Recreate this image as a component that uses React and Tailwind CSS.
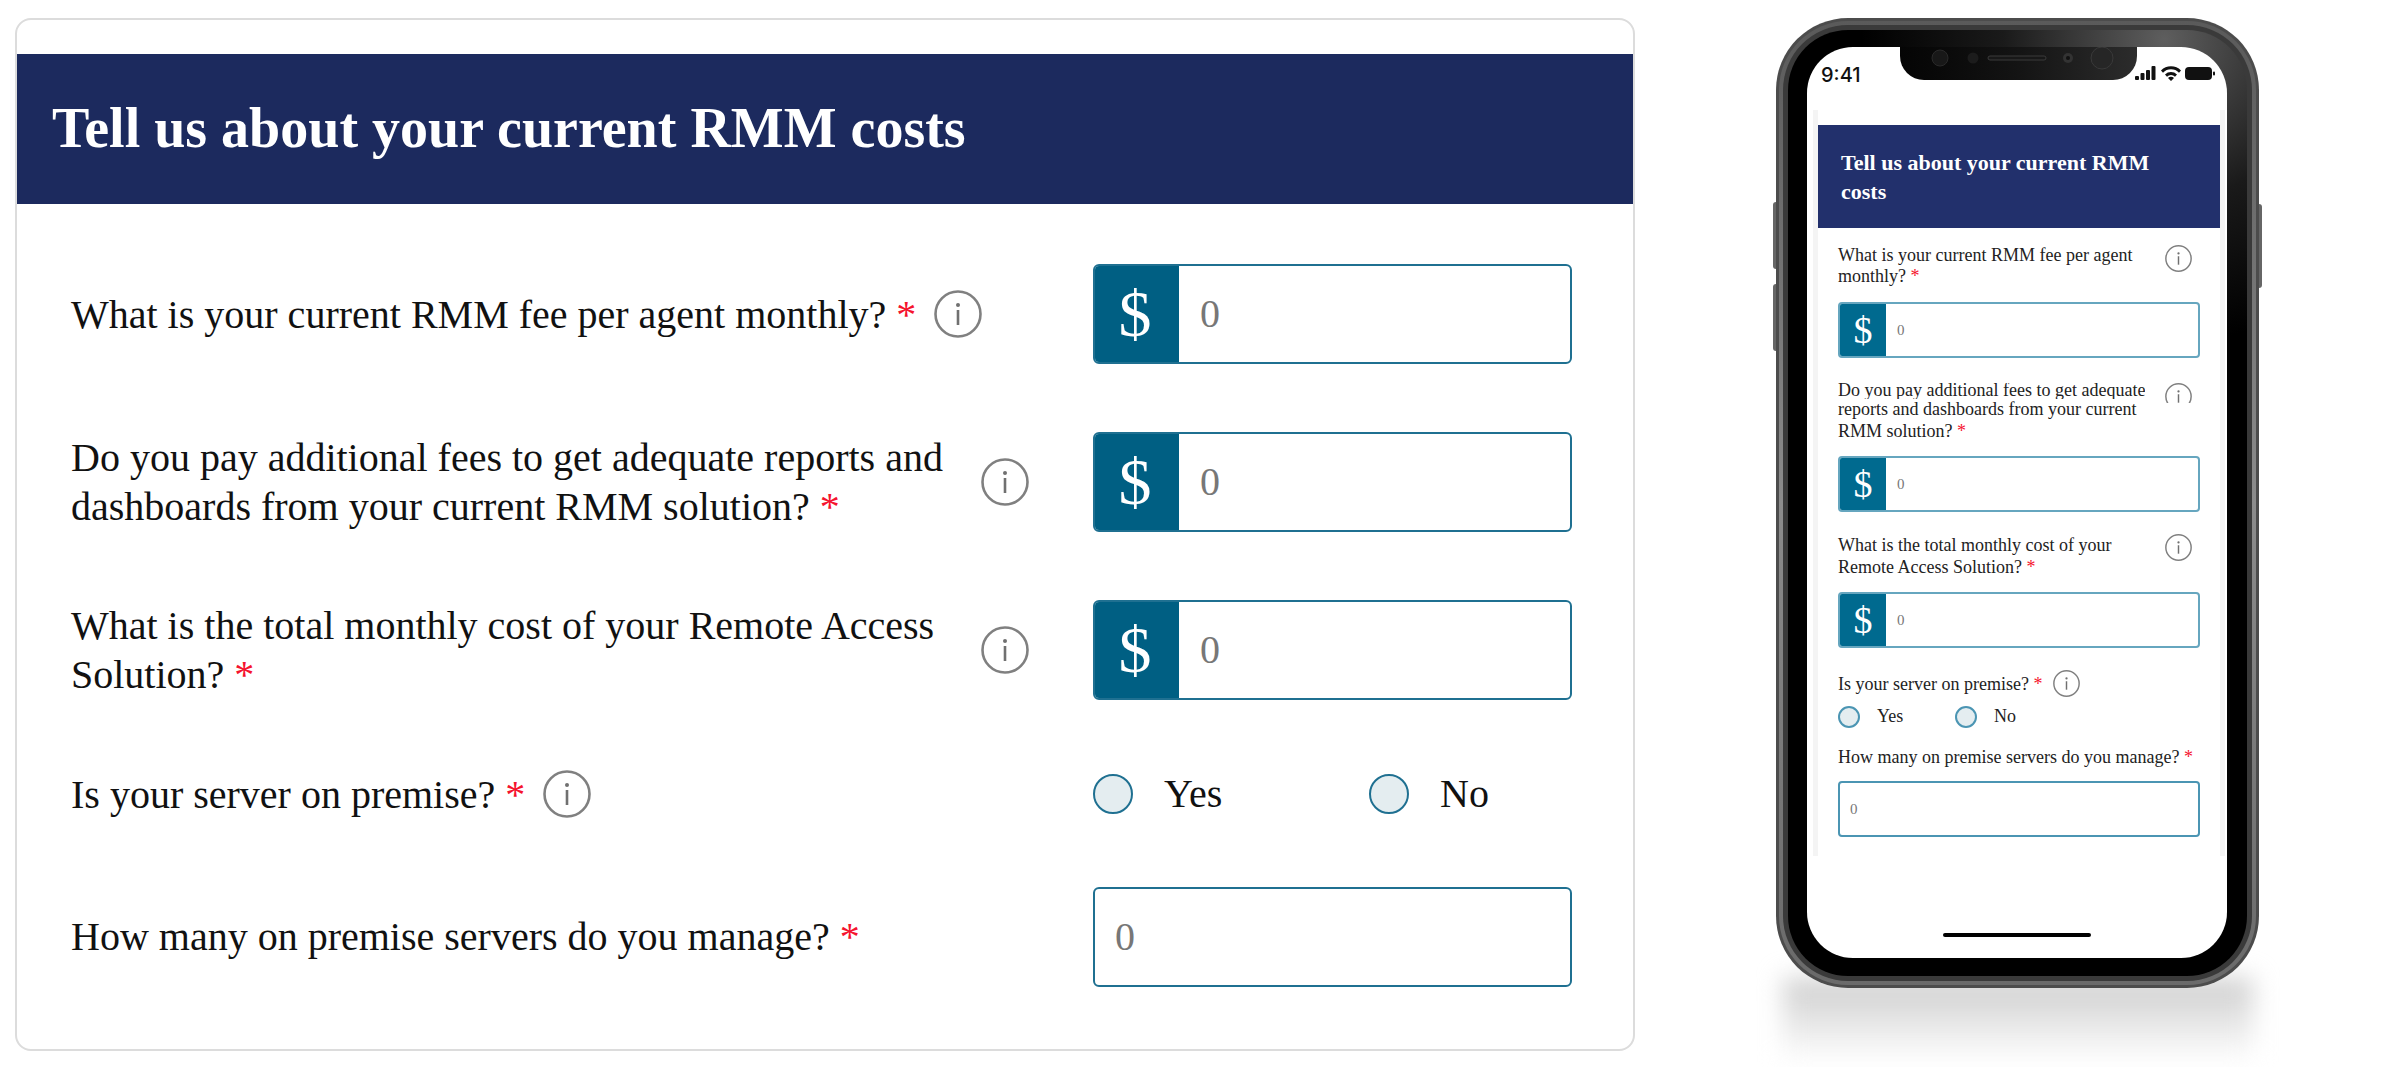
import React from 'react'

const serif = "font-['Liberation_Serif','Times_New_Roman',serif]"

function InfoIcon({ size }) {
  return (
    <svg width={size} height={size} viewBox="0 0 48 48" fill="none" className="shrink-0">
      <circle cx="24" cy="24" r="22.5" stroke="#808080" strokeWidth="2.6" />
      <circle cx="24" cy="15" r="2" fill="#707070" />
      <rect x="22.7" y="20" width="2.6" height="15" fill="#707070" />
    </svg>
  )
}

function Star() {
  return <span className="text-[#f5132e]">*</span>
}

// desktop form rows
function MoneyInput() {
  return (
    <div className="flex w-[479px] h-[100px] rounded-md border-2 border-[#1f7091] overflow-hidden bg-white">
      <div className="w-[84px] bg-[#005f83] text-white text-[66px] flex items-center justify-center leading-none pr-[4px]">$</div>
      <div className="flex-1 pl-[21px] flex items-center text-[40px] text-[#777]">0</div>
    </div>
  )
}

function Row({ h, label, mb, children, wide }) {
  return (
    <div className={`flex items-center ${h} ${mb}`}>
      <div className="w-[1022px] flex items-center justify-between">
        <div className="flex items-center gap-[18px]">
          <div className={`text-[40px] leading-[49px] text-[#111] ${wide ? 'w-[900px]' : ''}`}>{label}</div>
          {!wide && <InfoIcon size={48} />}
        </div>
        {wide && <div className="mr-[64px]"><InfoIcon size={48} /></div>}
      </div>
      {children}
    </div>
  )
}

function Radio({ label, w }) {
  return (
    <div className={`flex items-center gap-[31px] ${w}`}>
      <div className="w-[40px] h-[40px] rounded-full border-2 border-[#1f7091] bg-[#e4edf0]"></div>
      <span className="text-[40px] text-[#111]">{label}</span>
    </div>
  )
}

function DesktopCard() {
  return (
    <div className="w-[1620px] h-[1033px] rounded-[16px] border-2 border-[#dcdcdc] bg-white overflow-hidden pt-[34px] shrink-0">
      <div className="h-[150px] bg-[#1c2a5e] pl-[35px] pb-[3px] flex items-center">
        <h1 className="text-[56px] font-bold text-white leading-none">Tell us about your current RMM costs</h1>
      </div>
      <div className="pl-[54px] pt-[60px]">
        <Row h="h-[100px]" mb="mb-[68px]" label={<>What is your current RMM fee per agent monthly? <Star /></>}>
          <MoneyInput />
        </Row>
        <Row h="h-[100px]" mb="mb-[68px]" wide label={<>Do you pay additional fees to get adequate reports and<br />dashboards from your current RMM solution? <Star /></>}>
          <MoneyInput />
        </Row>
        <Row h="h-[100px]" mb="mb-[58px]" wide label={<>What is the total monthly cost of your Remote Access<br />Solution? <Star /></>}>
          <MoneyInput />
        </Row>
        <Row h="h-[72px]" mb="mb-[57px]" label={<>Is your server on premise? <Star /></>}>
          <Radio label="Yes" w="w-[276px]" />
          <Radio label="No" />
        </Row>
        <div className="flex items-center h-[100px]">
          <div className="w-[1022px] text-[40px] text-[#111]">How many on premise servers do you manage? <Star /></div>
          <div className="w-[479px] h-[100px] rounded-md border-2 border-[#1f7091] flex items-center pl-[20px] text-[40px] text-[#777]">0</div>
        </div>
      </div>
    </div>
  )
}

// phone form
function PhoneMoney({ mb }) {
  return (
    <div className={`flex h-[56px] rounded-[4px] border-2 border-[#66a6bf] overflow-hidden ${mb}`}>
      <div className="w-[46px] bg-[#006a8f] text-white text-[38px] flex items-center justify-center leading-none">$</div>
      <div className="flex-1 pl-[11px] flex items-center text-[15px] text-[#777]">0</div>
    </div>
  )
}

function StatusIcons() {
  return (
    <svg width="80" height="16" viewBox="0 0 80 16" fill="#111" className="mt-[2px]">
      <rect x="0" y="10" width="4" height="4" rx="1" />
      <rect x="5.500" y="7" width="4" height="7" rx="1" />
      <rect x="11" y="4" width="4" height="10" rx="1" />
      <rect x="16.500" y="0" width="4" height="14" rx="1" />
      <path d="M26 4.500a14 14 0 0 1 20 0l-2 2.200a11 11 0 0 0-16 0zM30 8.500a8.500 8.500 0 0 1 12 0l-2 2.200a5.500 5.500 0 0 0-8 0zM36 15l-3-3a4 4 0 0 1 6 0z" />
      <rect x="50" y="1" width="27" height="13" rx="4" />
      <rect x="78" y="5.500" width="2" height="4" rx="1" />
    </svg>
  )
}

function Notch() {
  return (
    <div className="absolute left-[93px] top-0 w-[237px] h-[33px] bg-gradient-to-r from-[#050505] via-[#141414] to-[#2c2c2c] rounded-b-[24px]">
      <svg width="237" height="33" viewBox="0 0 237 33" fill="none">
        <circle cx="40" cy="11" r="8" stroke="#2a2a2a" fill="#181818" />
        <circle cx="73" cy="11" r="5.500" fill="#1c1c1c" />
        <rect x="88" y="9" width="58" height="4" rx="2" stroke="#3a3a3a" fill="#181818" />
        <circle cx="168" cy="11" r="5" fill="#333" />
        <circle cx="168" cy="11" r="2" fill="#111" />
        <circle cx="202" cy="11" r="11" stroke="#3a3a3a" fill="#262626" />
      </svg>
    </div>
  )
}

function Phone() {
  return (
    <div className="w-[483px] h-[970px] rounded-[72px] bg-[#4c4c4c] p-[3px] relative z-10 shrink-0">
      {/* side buttons */}
      <div className="absolute left-[-3px] top-[184px] w-[3px] h-[67px] bg-[#666] rounded-l-sm"></div>
      <div className="absolute left-[-3px] top-[266px] w-[3px] h-[67px] bg-[#666] rounded-l-sm"></div>
      <div className="absolute right-[-3px] top-[186px] w-[3px] h-[84px] bg-[#666] rounded-r-sm"></div>
      <div className="w-full h-full rounded-[69px] bg-gradient-to-b from-[#5a5a5a] via-[#8c8c8c] to-[#6a6a6a] p-[4px]">
        <div className="w-full h-full rounded-[65px] bg-[#3a3a3a] p-[5px]">
          <div className="w-full h-full rounded-[60px] bg-[radial-gradient(circle_at_82%_1%,#5e5e5e,#1a1a1a_16%,#000_30%)] pl-[19px] pr-[20px] pt-[17px]">
            <div className="relative w-full h-[911px] rounded-[46px] bg-white overflow-hidden">
              <Notch />
              <div className="flex items-start justify-between h-[63px] pl-[14px] pr-[12px] pt-[17px] text-[20px] leading-[22px] font-medium font-['Inter',sans-serif] text-[#111]">
                <span>9:41</span>
                <StatusIcons />
              </div>
              <div className="mx-[6px] w-[412px] h-[746px] border-x-[5px] border-[#f4f4f4] pt-[15px]">
                <div className="h-[103px] bg-[#22306c] text-white font-bold text-[22px] leading-[29px] pl-[23px] pt-[23px]">
                  Tell us about your current RMM<br />costs
                </div>
                <div className="px-[20px] pt-[17px] text-[18px] text-[#222]">
                  <div className="flex justify-between leading-[21px] mb-[15px]">
                    <div>What is your current RMM fee per agent<br />monthly? <Star /></div>
                    <div className="mr-[8px]"><InfoIcon size={27} /></div>
                  </div>
                  <PhoneMoney mb="mb-[25px]" />
                  <div className="flex justify-between mb-[13px]">
                    <div>
                      <div className="leading-[15px] h-[16px] overflow-hidden">Do you pay additional fees to get adequate</div>
                      <div className="leading-[20px]">reports and dashboards from your current</div>
                      <div className="leading-[24px]">RMM solution? <Star /></div>
                    </div>
                    <div className="mr-[8px] h-[20px] overflow-hidden"><InfoIcon size={27} /></div>
                  </div>
                  <PhoneMoney mb="mb-[22px]" />
                  <div className="flex justify-between leading-[22px] mb-[14px]">
                    <div>What is the total monthly cost of your<br />Remote Access Solution? <Star /></div>
                    <div className="mr-[8px]"><InfoIcon size={27} /></div>
                  </div>
                  <PhoneMoney mb="mb-[22px]" />
                  <div className="flex items-center gap-[11px] h-[27px] mb-[9px] leading-[22px]">
                    <div>Is your server on premise? <Star /></div>
                    <InfoIcon size={27} />
                  </div>
                  <div className="flex items-center h-[21px] mb-[20px] leading-[21px]">
                    <div className="w-[117px] flex items-center gap-[17px]">
                      <div className="w-[22px] h-[22px] rounded-full border-2 border-[#4b95b3] bg-[#e4edf0]"></div>
                      <span>Yes</span>
                    </div>
                    <div className="flex items-center gap-[17px]">
                      <div className="w-[22px] h-[22px] rounded-full border-2 border-[#4b95b3] bg-[#e4edf0]"></div>
                      <span>No</span>
                    </div>
                  </div>
                  <div className="leading-[20px] mb-[14px] whitespace-nowrap">How many on premise servers do you manage? <Star /></div>
                  <div className="h-[56px] rounded-[4px] border-2 border-[#4b95b3] flex items-center pl-[10px] text-[15px] text-[#777]">0</div>
                </div>
              </div>
              {/* home bar */}
              <div className="mx-auto mt-[77px] w-[148px] h-[4px] rounded-full bg-black"></div>
            </div>
          </div>
        </div>
      </div>
    </div>
  )
}

export default function App() {
  return (
    <div className={`w-[2400px] h-[1067px] bg-white overflow-hidden flex items-start pt-[18px] pl-[15px] ${serif}`}>
      <DesktopCard />
      <div className="ml-[141px] flex flex-col items-center shrink-0">
        <Phone />
        <div className="w-[470px] h-[84px] -mt-[10px] bg-gradient-to-b from-[#cccccc] to-white blur-[12px]"></div>
      </div>
    </div>
  )
}
